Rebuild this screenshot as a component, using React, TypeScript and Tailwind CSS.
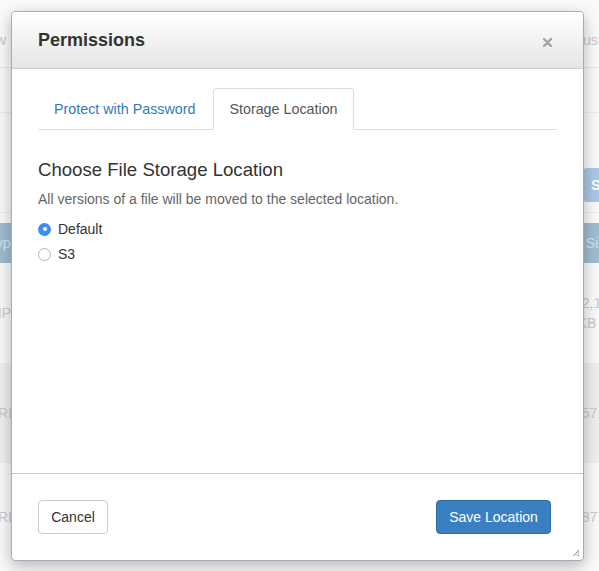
import { useState } from 'react';

type Location = 'default' | 's3';
type Tab = 'password' | 'storage';

const Radio = ({ checked }: { checked: boolean }) => (
  <span
    className={`flex h-[13px] w-[13px] items-center justify-center rounded-full ${
      checked ? 'bg-[#3b8df5]' : 'border border-[#b3b3b3] bg-white'
    }`}
  >
    {checked && <span className="h-[4px] w-[4px] rounded-full bg-white" />}
  </span>
);

const App = () => {
  const [tab, setTab] = useState<Tab>('storage');
  const [location, setLocation] = useState<Location>('default');

  const tabClass = (active: boolean) =>
    `-mb-px mr-[2px] h-[42px] rounded-t-[4px] border px-[15px] text-[14.3px] leading-[40px] ${
      active
        ? 'border-[#ddd] border-b-white bg-white text-[#555]'
        : 'border-transparent text-[#337ab7]'
    }`;

  return (
    <div className="relative h-[571px] w-[599px] overflow-hidden bg-[#fafafa] font-['Liberation_Sans',Arial,sans-serif] text-[#c9c9c9]">
      {/* faded page behind the dialog */}
      <div className="flex flex-col">
        <div className="flex h-[68px] items-end justify-between border-b border-[#e6e6e6] pb-[16px] text-[14px]">
          <span className="-ml-[22px]">New</span>
          <span className="-mr-[40px]">Customize</span>
        </div>
        <div className="h-[45px] border-b border-[#ececec]" />
        <div className="flex h-[100px] items-end justify-end border-b border-[#ececec] pb-[10px]">
          <span className="-mr-[30px] h-[34px] w-[46px] rounded-[4px] bg-[#a9c7e4] pl-[8px] text-[14px] font-bold leading-[34px] text-white">
            S
          </span>
        </div>
        <div className="mt-[10px] flex h-[40px] items-center justify-between bg-[#9fbdd1] text-[14px] text-[#d7e4ee]">
          <span className="-ml-[12px]">Type</span>
          <span className="-mr-[14px]">Size</span>
        </div>
        <div className="flex h-[100px] items-center justify-between text-[14px]">
          <span className="-ml-[10px]">MP3</span>
          <span className="-mr-[10px] flex flex-col leading-[20px]">
            <span>2,13</span>
            <span className="-ml-[4px]">KB</span>
          </span>
        </div>
        <div className="flex h-[100px] items-center justify-between bg-[#efefef] text-[14px]">
          <span className="-ml-[12px]">URL</span>
          <span className="-mr-[6px]">571</span>
        </div>
        <div className="flex h-[108px] items-start justify-between pt-[44px] text-[14px]">
          <span className="-ml-[12px]">URL</span>
          <span className="-mr-[6px]">877</span>
        </div>
      </div>

      {/* dialog */}
      <div className="absolute left-[11px] top-[11px] flex h-[550px] w-[573px] flex-col rounded-[4px] border border-[#a3adb8] bg-white text-[#333] shadow-[0_5px_16px_rgba(0,0,0,0.28)]">
        <div className="flex h-[57px] shrink-0 items-center justify-between rounded-t-[4px] border-b border-[#cfcfcf] bg-gradient-to-b from-white to-[#e6e6e6] pl-[26px] pr-[31px]">
          <h3 className="mt-[1px] text-[18px] font-bold">Permissions</h3>
          <svg width="9" height="9" viewBox="0 0 9 9" className="mt-[4px]">
            <path d="M1 1L8 8M8 1L1 8" stroke="#a3a3a3" strokeWidth="2.4" strokeLinecap="round" />
          </svg>
        </div>

        <div className="flex-1 px-[26px] pt-[19px]">
          <div className="flex border-b border-[#ddd]">
            <button className={tabClass(tab === 'password')} onClick={() => setTab('password')}>
              Protect with Password
            </button>
            <button className={tabClass(tab === 'storage')} onClick={() => setTab('storage')}>
              Storage Location
            </button>
          </div>

          <h4 className="mt-[29px] text-[18.6px] leading-[22px]">Choose File Storage Location</h4>
          <p className="mt-[9px] text-[14px] leading-[18px] text-[#666]">
            All versions of a file will be moved to the selected location.
          </p>
          <div className="mt-[11px] flex flex-col gap-[5px] text-[14px]">
            {(['default', 's3'] as Location[]).map((loc) => (
              <label
                key={loc}
                className="flex h-[20px] cursor-pointer items-center gap-[7px]"
                onClick={() => setLocation(loc)}
              >
                <Radio checked={location === loc} />
                <span>{loc === 'default' ? 'Default' : 'S3'}</span>
              </label>
            ))}
          </div>
        </div>

        <div className="relative flex h-[87px] shrink-0 items-center justify-between border-t border-[#c3c9cf] pl-[26px] pr-[32px]">
          <button className="h-[34px] w-[70px] rounded-[4px] border border-[#ccc] bg-white text-[14px] text-[#333]">
            Cancel
          </button>
          <button className="h-[34px] w-[115px] rounded-[4px] border border-[#2e6da4] bg-[#3a7fc2] text-[14px] text-white">
            Save Location
          </button>
          <svg width="8" height="8" viewBox="0 0 8 8" className="absolute bottom-[3px] right-[3px]">
            <path d="M7 1L1 7M7 3.5L3.5 7M7 6L6 7" stroke="#444" strokeWidth="1" strokeDasharray="1 0.6" />
          </svg>
        </div>
      </div>
    </div>
  );
};

export default App;
